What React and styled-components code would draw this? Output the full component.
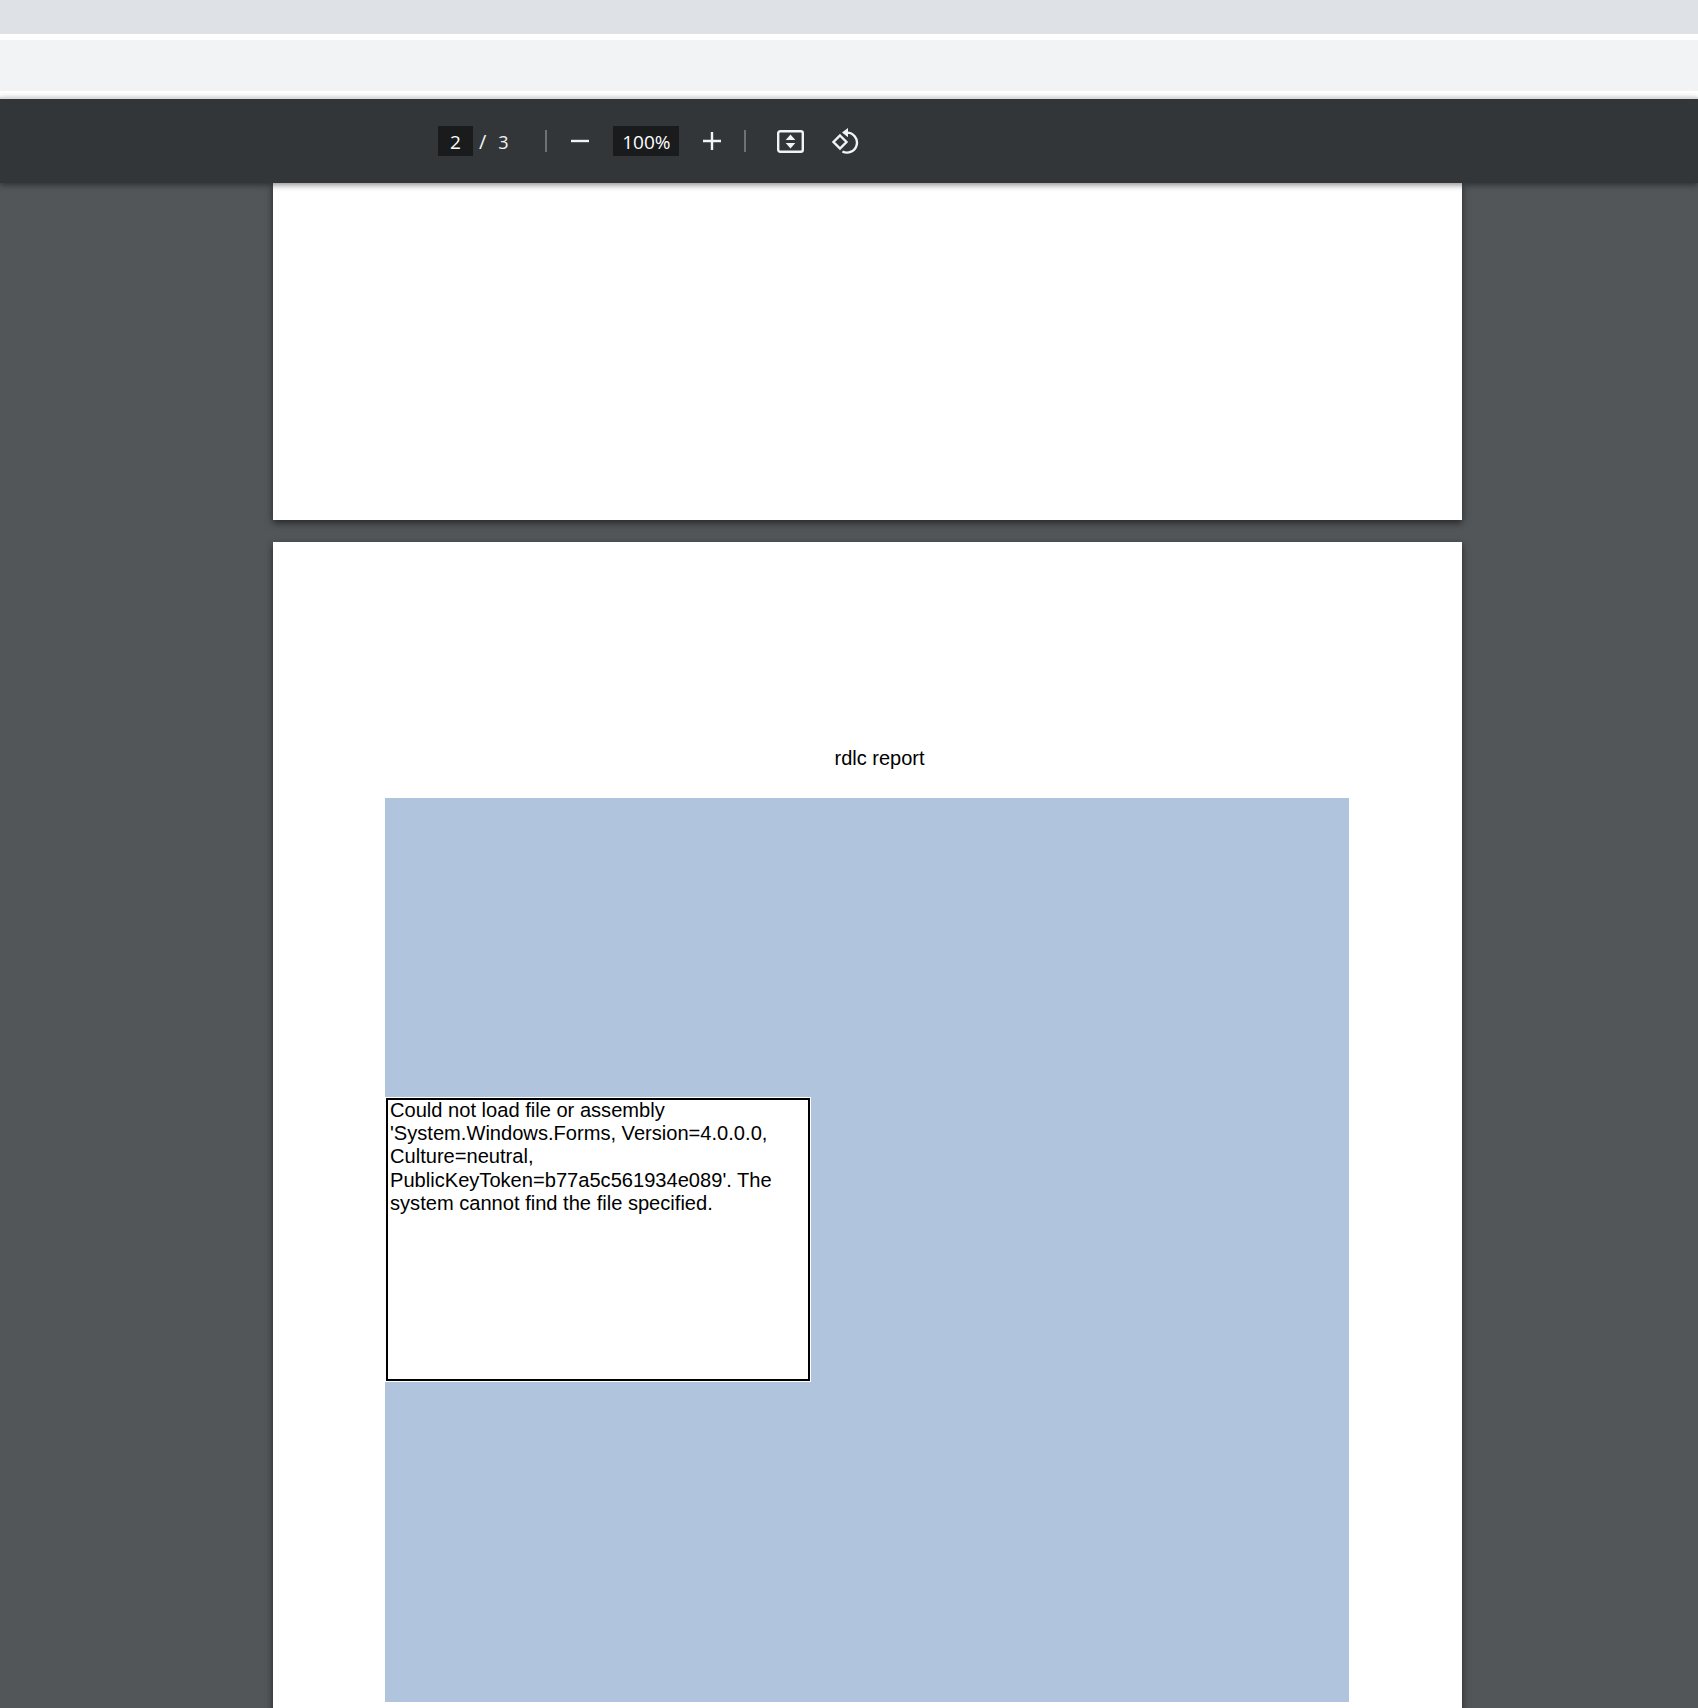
import React from "react";
import styled, { createGlobalStyle } from "styled-components";

const GlobalStyle = createGlobalStyle`
  html, body {
    margin: 0;
    padding: 0;
    background: #fff;
  }
`;

const Wrap = styled.div`
  width: 1698px;
  height: 1708px;
  display: flex;
  flex-direction: column;
  overflow: hidden;
  background: #fff;
`;

const TabStrip = styled.div`
  height: 34px;
  flex: none;
  background: #dee1e6;
`;

const AddressBar = styled.div`
  height: 51px;
  flex: none;
  margin: 6px 0;
  background: #f1f3f4;
`;

const Toolbar = styled.div`
  height: 86px;
  flex: none;
  position: relative;
  z-index: 2;
  display: flex;
  align-items: center;
  padding-left: 438px;
  background: #323639;
  border-top: 2px solid #dcdcdc;
  box-sizing: border-box;
  box-shadow: 0 2px 6px rgba(0, 0, 0, 0.45);
  color: #f1f3f4;
  font-family: "Open Sans", "Noto Sans", sans-serif;
  font-size: 19px;
`;

const ValueBox = styled.div`
  width: ${(props) => props.w}px;
  height: 30px;
  padding-top: 1px;
  box-sizing: border-box;
  display: flex;
  align-items: center;
  justify-content: center;
  background: #191b1c;
  color: #fff;
`;

const Slash = styled.span`
  margin-left: 6px;
  padding-top: 1px;
  font-size: 20px;
`;

const Total = styled.span`
  margin-left: 12px;
  padding-top: 1px;
  width: 47px;
  font-size: 18px;
`;

const Divider = styled.div`
  width: 2px;
  height: 22px;
  background: #6f7274;
`;

const IconBtn = styled.div`
  display: flex;
  align-items: center;
  justify-content: center;
  width: ${(props) => props.w}px;
  margin: ${(props) => props.m || "0"};
  height: 26px;
`;

const Viewer = styled.div`
  flex: 1;
  min-height: 0;
  display: flex;
  flex-direction: column;
  gap: 22px;
  padding-left: 273px;
  background: #525659;
`;

const BlankPage = styled.div`
  width: 1189px;
  height: 337px;
  flex: none;
  background: #fff;
  box-shadow: 0 3px 7px rgba(0, 0, 0, 0.55);
`;

const ReportPage = styled.div`
  width: 1189px;
  flex: none;
  height: 1200px;
  background: #fff;
  box-shadow: 0 3px 7px rgba(0, 0, 0, 0.55);
  padding: 204px 0 0 112px;
  box-sizing: border-box;
  font-family: "Liberation Sans", Arial, sans-serif;
  color: #000;
`;

const ReportTitle = styled.div`
  width: 964px;
  height: 52px;
  padding-left: 25px;
  box-sizing: border-box;
  font-size: 20px;
  line-height: 24px;
  text-align: center;
`;

const ReportBody = styled.div`
  width: 964px;
  height: 904px;
  padding: 300px 0 0 1px;
  box-sizing: border-box;
  background: #b0c4de;
`;

const ErrorBox = styled.div`
  width: 424px;
  height: 283px;
  box-sizing: border-box;
  padding: 0 2px 0 2px;
  border: 2px solid #000;
  outline: 1px solid #fff;
  background: #fff;
  font-size: 20.1px;
  line-height: 23.2px;
`;

const ErrorText = styled.p`
  margin: -1px 0 0;
`;

const Minus = () => (
  <svg width="18" height="18" viewBox="0 0 18 18">
    <path d="M0 9h18" stroke="#f1f3f4" strokeWidth="2.4" />
  </svg>
);

const Plus = () => (
  <svg width="18" height="18" viewBox="0 0 18 18">
    <path d="M0 9h18M9 0v18" stroke="#f1f3f4" strokeWidth="2.4" />
  </svg>
);

const FitIcon = () => (
  <svg width="27" height="23" viewBox="0 0 27 23">
    <rect x="1.2" y="1.2" width="24.6" height="20.6" rx="2" fill="none" stroke="#f1f3f4" strokeWidth="2.4" />
    <path d="M13.5 4.6l4.8 5.4h-9.6zM13.5 18.4l4.8-5.4h-9.6z" fill="#f1f3f4" />
  </svg>
);

const RotateIcon = () => (
  <svg width="28" height="26" viewBox="0 0 28 26">
    <path d="M8 7.5l6.5 6.5L8 20.5 1.5 14z" fill="none" stroke="#f1f3f4" strokeWidth="2.4" />
    <path d="M13 4.6h2a10 10 0 1 1-4.6 18.9" fill="none" stroke="#f1f3f4" strokeWidth="2.4" />
    <path d="M16 0v9.2L10 4.6z" fill="#f1f3f4" />
  </svg>
);

const App = () => {
  return (
    <Wrap>
      <GlobalStyle />
      <TabStrip />
      <AddressBar />
      <Toolbar>
        <ValueBox w={35}>2</ValueBox>
        <Slash>/</Slash>
        <Total>3</Total>
        <Divider />
        <IconBtn w={18} m="0 24px"><Minus /></IconBtn>
        <ValueBox w={66}>100%</ValueBox>
        <IconBtn w={18} m="0 23px 0 24px"><Plus /></IconBtn>
        <Divider />
        <IconBtn w={27} m="0 28px 0 31px"><FitIcon /></IconBtn>
        <IconBtn w={28}><RotateIcon /></IconBtn>
      </Toolbar>
      <Viewer>
        <BlankPage />
        <ReportPage>
          <ReportTitle>rdlc report</ReportTitle>
          <ReportBody>
            <ErrorBox>
              <ErrorText>
                Could not load file or assembly 'System.Windows.Forms, Version=4.0.0.0, Culture=neutral, PublicKeyToken=b77a5c561934e089'. The system cannot find the file specified.
              </ErrorText>
            </ErrorBox>
          </ReportBody>
        </ReportPage>
      </Viewer>
    </Wrap>
  );
};

export default App;
